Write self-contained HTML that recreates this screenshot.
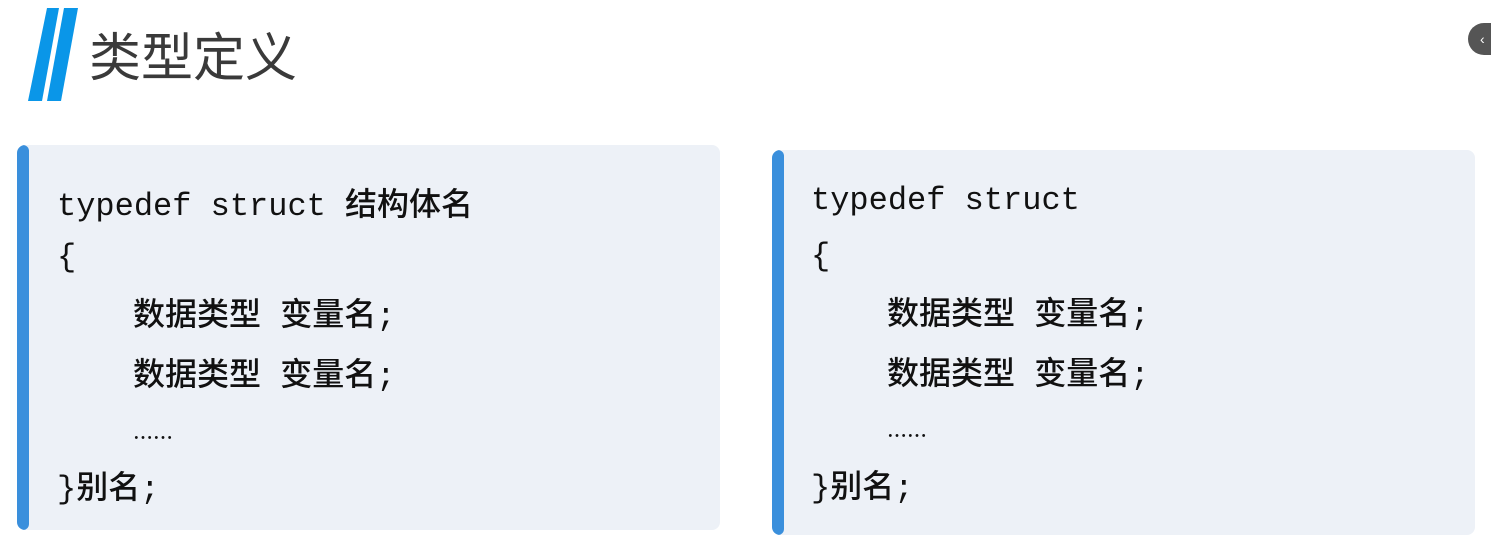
<!DOCTYPE html>
<html><head><meta charset="utf-8"><style>
body{margin:0;width:1491px;height:554px;background:#fff;position:relative;overflow:hidden;font-family:"Liberation Sans","Noto Sans CJK SC",sans-serif}
.title{position:absolute;left:89px;top:22px;font-size:52px;color:#3a3a3a;letter-spacing:0px;font-family:"Noto Sans CJK SC",sans-serif;font-weight:400;line-height:64px}
.box{position:absolute;background:#edf1f7;border-radius:8px;overflow:hidden}
.box:before{content:"";position:absolute;left:0;top:0;bottom:0;width:12px;background:#3a8fdc;border-radius:6px}
.l{position:absolute;white-space:pre;font-family:"Liberation Mono","Noto Sans CJK SC",monospace;font-size:32px;color:#111;line-height:40px}
.c{font-family:"Noto Sans CJK SC",sans-serif;font-size:32px;font-weight:500}
</style></head><body>
<svg style="position:absolute;left:0;top:0" width="100" height="110"><polygon points="47,8 59,8 42,101 28,101" fill="#0a96e8"/><polygon points="64,8 78,8 61,101 47,101" fill="#0a96e8"/></svg>
<div class="title">类型定义</div>
<div style="position:absolute;left:1468px;top:23px;width:40px;height:32px;border-radius:16px;background:#555;color:#fff;font-size:14px;line-height:32px;padding-left:12px;box-sizing:border-box">‹</div>

<div class="box" style="left:17px;top:145px;width:703px;height:385px">
<div class="l" style="left:40px;top:37px">typedef struct <span class="c">结构体名</span></div>
<div class="l" style="left:40px;top:93px">{</div>
<div class="l" style="left:116px;top:147px"><span class="c">数据类型</span> <span class="c">变量名</span>;</div>
<div class="l" style="left:116px;top:207px"><span class="c">数据类型</span> <span class="c">变量名</span>;</div>
<div class="l" style="left:116px;top:272px"><span class="c" style="font-size:20px">……</span></div>
<div class="l" style="left:40px;top:320px">}<span class="c">别名</span>;</div>
</div>

<div class="box" style="left:772px;top:150px;width:703px;height:385px">
<div class="l" style="left:39px;top:31px">typedef struct</div>
<div class="l" style="left:39px;top:87px">{</div>
<div class="l" style="left:115px;top:141px"><span class="c">数据类型</span> <span class="c">变量名</span>;</div>
<div class="l" style="left:115px;top:201px"><span class="c">数据类型</span> <span class="c">变量名</span>;</div>
<div class="l" style="left:115px;top:265px"><span class="c" style="font-size:20px">……</span></div>
<div class="l" style="left:39px;top:314px">}<span class="c">别名</span>;</div>
</div>
</body></html>
